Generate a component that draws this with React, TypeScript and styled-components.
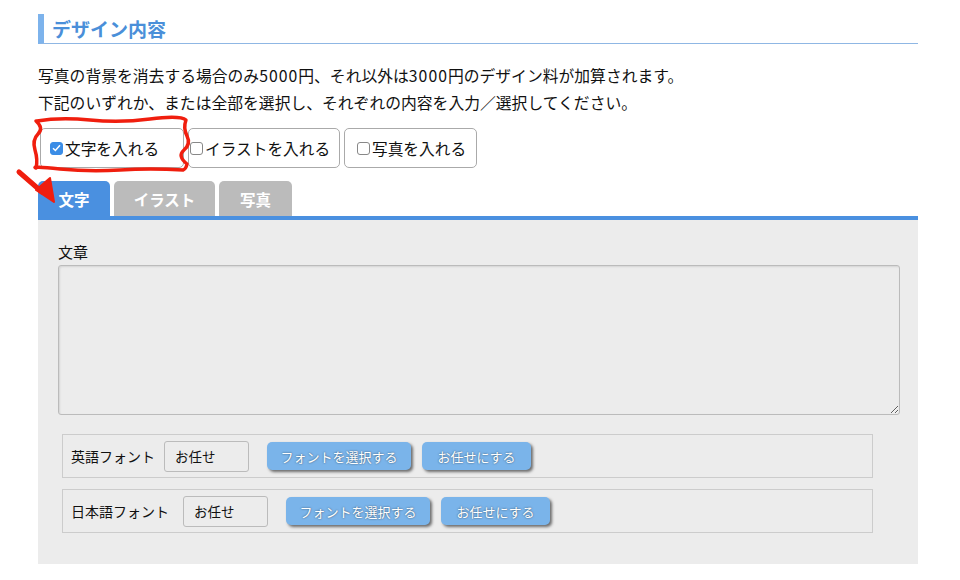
import React from 'react';
import styled, {createGlobalStyle} from 'styled-components';

const GlobalStyle = createGlobalStyle`
	body {
		margin:0;
		background:#fff;
		font-family:"Noto Sans CJK JP", "Liberation Sans", sans-serif;
		color:#111;
	}
`;

const Page = styled.div`
	position:relative;
	width:880px;
	padding:14px 0 0 38px;
`;

const Heading = styled.h2`
	margin:0;
	height:29px;
	display:flex;
	align-items:center;
	border-left:6px solid #7db3ec;
	border-bottom:1px solid #8fb7e4;
	padding-left:8px;
	font-size:19px;
	font-weight:bold;
	color:#4a8fd9;
	line-height:1;
`;

const Lead = styled.p`
	margin:18px 0 0;
	font-size:15.8px;
	line-height:27px;
`;

const Num = styled.span`
	letter-spacing:1px;
`;

const ChoiceRow = styled.div`
	display:flex;
	gap:4px;
	margin-top:12px;
	padding-left:2px;
`;

const Choice = styled.label<{w:number; pad:number}>`
	box-sizing:border-box;
	width:${p => p.w}px;
	height:40px;
	display:flex;
	align-items:center;
	padding-left:${p => p.pad}px;
	border:1px solid #aaa;
	border-radius:5px;
	background:#fff;
	font-size:15.7px;
`;

const Box = styled.span<{checked?:boolean}>`
	width:13px;
	height:13px;
	margin-right:2px;
	border-radius:3px;
	border:1px solid ${p => p.checked ? '#3b8de6' : '#888'};
	background:${p => p.checked ? '#3b8de6' : '#fff'};
	display:flex;
	align-items:center;
	justify-content:center;
	box-sizing:border-box;
`;

const Tabs = styled.div`
	display:flex;
	gap:4px;
	margin-top:13px;
`;

const Tab = styled.div<{active?:boolean; w:number}>`
	width:${p => p.w}px;
	height:35px;
	display:flex;
	align-items:center;
	justify-content:center;
	border-radius:5px 5px 0 0;
	background:${p => p.active ? '#4a90e0' : '#bbbbbb'};
	color:#fff;
	font-weight:bold;
	font-size:15.5px;
`;

const Panel = styled.div`
	border-top:4px solid #4a90e0;
	background:#ececec;
	padding:21px 18px 31px 20px;
`;

const FieldLabel = styled.div`
	font-size:15px;
	line-height:22px;
	margin-bottom:2px;
`;

const TextBox = styled.textarea`
	display:block;
	box-sizing:border-box;
	width:842px;
	height:150px;
	border:1px solid #bbb;
	border-radius:3px;
	background:#ececec;
	box-shadow:inset 1px 1px 2px rgba(0,0,0,0.1);
	resize:both;
`;

const FontRows = styled.div`
	display:flex;
	flex-direction:column;
	gap:11px;
	margin:19px 0 0 4px;
	width:811px;
`;

const FontRow = styled.div`
	box-sizing:border-box;
	height:44px;
	display:flex;
	align-items:center;
	padding-left:8px;
	border:1px solid #ccc;
	font-size:14px;
`;

const RowLabel = styled.span<{w:number}>`
	width:${p => p.w}px;
`;

const FontValue = styled.div`
	box-sizing:border-box;
	width:85px;
	height:31px;
	display:flex;
	align-items:center;
	padding-left:10px;
	border:1px solid #bbb;
	border-radius:3px;
	font-size:13.5px;
	margin-right:18px;
`;

const BlueButton = styled.button<{w:number}>`
	width:${p => p.w}px;
	height:28px;
	margin-right:11px;
	border:none;
	border-radius:5px;
	background:#7ab4ea;
	color:#fff;
	font-family:inherit;
	font-size:13px;
	text-shadow:0 0 2px rgba(0,0,0,0.6);
	box-shadow:2px 2px 3px rgba(0,0,0,0.55);
	padding:0;
`;

const Annotation = styled.svg`
	position:absolute;
	left:0;
	top:0;
	pointer-events:none;
`;

const Check = () => (
	<svg width="9" height="8" viewBox="0 0 9 8">
		<path d="M1 4.2 L3.4 6.5 L8 1.2" fill="none" stroke="#fff" strokeWidth="1.5"/>
	</svg>
);

const choices = [
	{label: '文字を入れる', w: 144, pad: 9, checked: true},
	{label: 'イラストを入れる', w: 152, pad: 1},
	{label: '写真を入れる', w: 133, pad: 12},
];

const fontRows = [
	{label: '英語フォント', w: 93},
	{label: '日本語フォント', w: 112},
];

const App = () => (
	<>
		<GlobalStyle/>
		<Page>
			<Heading>デザイン内容</Heading>
			<Lead>
				写真の背景を消去する場合のみ<Num>5000</Num>円、それ以外は<Num>3000</Num>円のデザイン料が加算されます。<br/>
				下記のいずれか、または全部を選択し、それぞれの内容を入力／選択してください。
			</Lead>
			<ChoiceRow>
				{choices.map(c => (
					<Choice key={c.label} w={c.w} pad={c.pad}>
						<Box checked={c.checked}>{c.checked && <Check/>}</Box>{c.label}
					</Choice>
				))}
			</ChoiceRow>
			<Tabs>
				<Tab active w={72}>文字</Tab>
				<Tab w={101}>イラスト</Tab>
				<Tab w={73}>写真</Tab>
			</Tabs>
			<Panel>
				<FieldLabel>文章</FieldLabel>
				<TextBox/>
				<FontRows>
					{fontRows.map(r => (
						<FontRow key={r.label}>
							<RowLabel w={r.w}>{r.label}</RowLabel>
							<FontValue>お任せ</FontValue>
							<BlueButton w={144}>フォントを選択する</BlueButton>
							<BlueButton w={109}>お任せにする</BlueButton>
						</FontRow>
					))}
				</FontRows>
			</Panel>
			<Annotation width="960" height="580">
				<path
					d="M37 121 Q60 117 90 120 T150 119 T186 120 Q183 128 187 136 T184 150 T187 164 Q186 169 183 170 Q150 168 120 170 T60 169 T36 168 Q38 160 35 150 T38 134 T36 121 Z"
					fill="none" stroke="#f01e0e" strokeWidth="3.5" strokeLinejoin="round"/>
				<path d="M19 172 L42 192" stroke="#f01e0e" strokeWidth="5" strokeLinecap="round"/>
				<path d="M36 190 L50 178 L54 202 Z" fill="#f01e0e" stroke="#f01e0e" strokeWidth="2" strokeLinejoin="round"/>
			</Annotation>
		</Page>
	</>
);

export default App;
